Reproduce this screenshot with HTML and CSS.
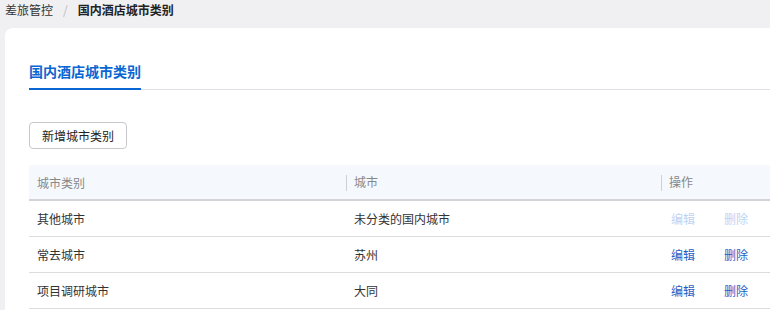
FILE: index.html
```html
<!DOCTYPE html>
<html lang="zh-CN">
<head>
  <meta charset="UTF-8" />
  <title>国内酒店城市类别</title>
  <link rel="stylesheet" href="styles.css">
</head>
<body>
  <div class="breadcrumb">
    <span class="crumb">差旅管控</span>
    <span class="sep">/</span>
    <span class="crumb current">国内酒店城市类别</span>
  </div>
  <div class="card">
    <div class="tabs">
      <div class="tab active">国内酒店城市类别</div>
    </div>
    <div class="toolbar">
      <button class="btn">新增城市类别</button>
    </div>
    <table class="table">
      <thead>
        <tr>
          <th class="col-type">城市类别</th>
          <th class="col-city"><span class="divider"></span>城市</th>
          <th class="col-op"><span class="divider"></span>操作</th>
        </tr>
      </thead>
      <tbody>
        <tr>
          <td>其他城市</td>
          <td>未分类的国内城市</td>
          <td class="ops"><a class="link disabled">编辑</a><a class="link disabled">删除</a></td>
        </tr>
        <tr>
          <td>常去城市</td>
          <td>苏州</td>
          <td class="ops"><a class="link">编辑</a><a class="link">删除</a></td>
        </tr>
        <tr>
          <td>项目调研城市</td>
          <td>大同</td>
          <td class="ops"><a class="link">编辑</a><a class="link">删除</a></td>
        </tr>
      </tbody>
    </table>
  </div>
</body>
</html>
```

FILE: styles.css
```css
html,
body {
  height: 310px;
  overflow: hidden;
}
body {
  margin: 0;
  padding: 0 0 0 5px;
  background-color: #f0f0f2;
  font-family: "Noto Sans CJK SC", "Noto Sans", sans-serif;
  font-size: 12px;
  color: #333;
}
.breadcrumb {
  height: 28px;
  display: flex;
  align-items: flex-start;
  gap: 8px;
  line-height: 20px;
}
.crumb {
  color: #333;
}
.crumb.current {
  font-weight: bold;
  color: #222;
}
.sep {
  color: #bbb;
  margin: 0 2px;
}
.card {
  box-sizing: border-box;
  background-color: white;
  border-radius: 8px 0 0 0;
  padding: 32px 0 0 24px;
  height: 282px;
  overflow: hidden;
}
.tabs {
  border-bottom: 1px solid #dcdfe6;
  display: flex;
}
.tab {
  font-size: 14px;
  font-weight: bold;
  color: #0a66d2;
  padding-bottom: 6px;
  border-bottom: 2px solid #0a66d2;
  margin-bottom: -1px;
  line-height: 22px;
}
.toolbar {
  margin-top: 32px;
  margin-bottom: 16px;
}
.btn {
  font-family: inherit;
  font-size: 12px;
  color: #222;
  background: white;
  border: 1px solid #c8c8cc;
  border-radius: 4px;
  height: 27px;
  padding: 0 12px;
}
.table {
  width: 790px;
  border-collapse: collapse;
}
.table th {
  background-color: #f5f8fc;
  color: #888;
  font-weight: normal;
  text-align: left;
  height: 34px;
  padding: 0 0 0 8px;
  border-bottom: 2px solid #d4d4d8;
}
.table td {
  height: 35px;
  padding: 0 0 0 8px;
  border-bottom: 1px solid #dcdcdf;
}
.col-type {
  width: 309px;
}
.col-city {
  width: 307px;
}
.divider {
  display: inline-block;
  width: 1px;
  height: 16px;
  background-color: #d0d0d4;
  vertical-align: middle;
  margin: 0 7px 0 -8px;
}
.ops {
  padding-left: 10px !important;
  white-space: nowrap;
}
.link {
  color: #1f5fc6;
  margin-right: 29px;
}
.link.disabled {
  color: #bcd4f4;
}
```
